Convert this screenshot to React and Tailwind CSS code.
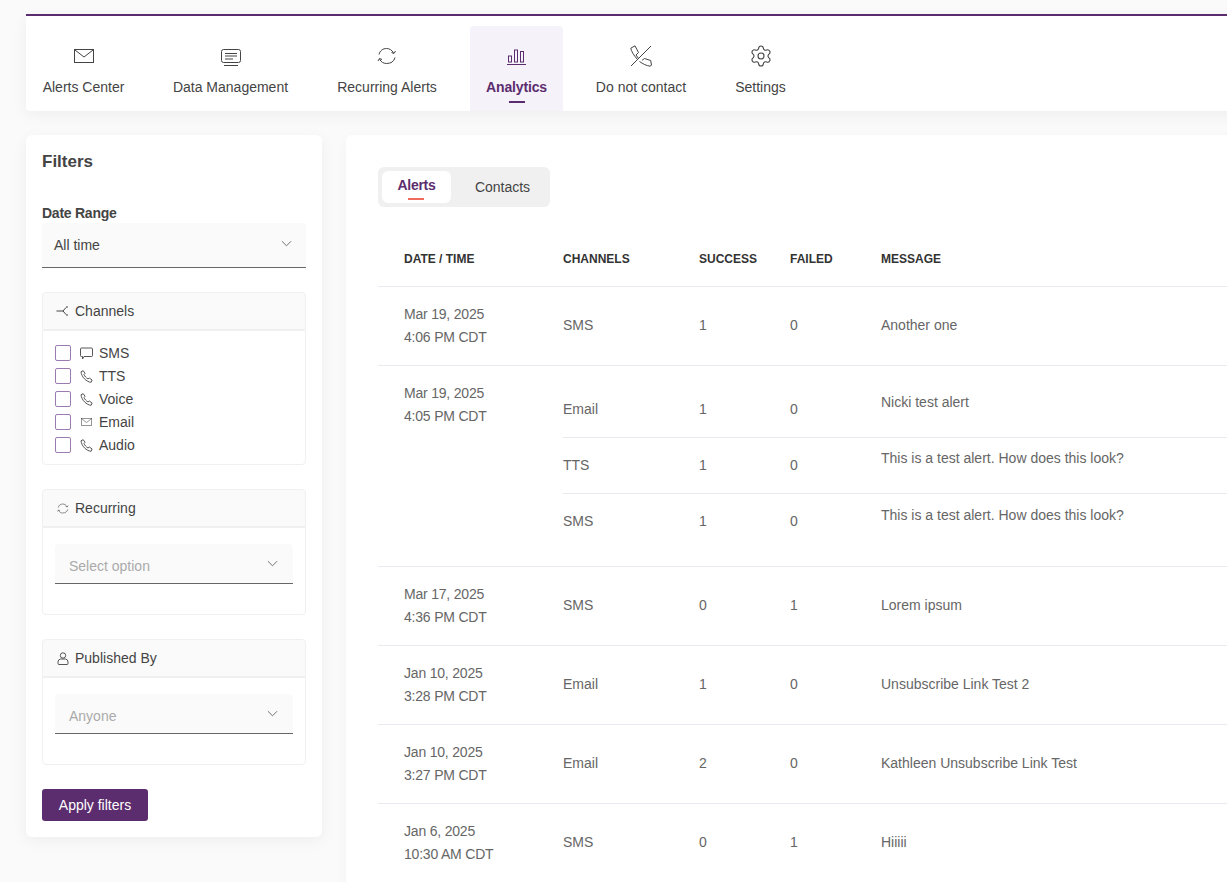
import React from "react";
import { Settings } from "lucide-react";

const font = { fontFamily: '"Liberation Sans", Arial, sans-serif' };

function Envelope({ className }) {
  return (
    <svg viewBox="0 0 20 14" fill="none" stroke="currentColor" strokeWidth="1" className={className}>
      <rect x="0.5" y="0.5" width="19" height="13" />
      <path d="M1 1l9 7 9-7" />
    </svg>
  );
}

function DataIcon({ className }) {
  return (
    <svg viewBox="0 0 20 17" fill="none" stroke="currentColor" strokeWidth="1" className={className}>
      <rect x="0.5" y="0.5" width="19" height="13" rx="2" />
      <path d="M4 4.500h12M4 7h12M4 10h8M3 16.500h14" />
    </svg>
  );
}

function RefreshIcon({ className }) {
  return (
    <svg viewBox="0 0 20 18" fill="none" stroke="currentColor" strokeWidth="1" className={className}>
      <path d="M2 7.500C3 3.500 6 1.500 9.500 1.500c3 0 5.500 1.500 7 4.500" />
      <path d="M18 10.500c-1 4-4 6-8.500 6-3 0-5.500-1.500-7-4.500" />
      <path d="M14.500 5.500l2.500 1 1.500-2.500M5 12.500l-2.500-1-1.500 2.500" />
    </svg>
  );
}

function BarsIcon({ className }) {
  return (
    <svg viewBox="0 0 19 16" fill="none" stroke="currentColor" strokeWidth="1" className={className}>
      <rect x="1.500" y="7" width="3" height="6" />
      <rect x="7.500" y="1" width="3" height="12" />
      <rect x="13.500" y="2.500" width="3" height="10.500" />
      <path d="M0 15.500h19" />
    </svg>
  );
}

function PhoneOff({ className }) {
  return (
    <svg viewBox="0 0 22 22" fill="none" stroke="currentColor" strokeWidth="1" strokeLinejoin="round" className={className}>
      <path d="M21 1L1 21" />
      <path d="M7.500 14.500C3.500 10 1.200 6 0.800 3.200L5 0.800l3.500 6.700-2.500 2.500 2.200 3" />
      <path d="M9.500 16.500c3.500 2.500 7 4.200 10.500 4.700l1.500-1-.8-4.700-6.200-2-2.500 1.800" />
    </svg>
  );
}

function PhoneSmall({ className }) {
  return (
    <svg viewBox="0 0 13 13" fill="none" stroke="currentColor" strokeWidth="0.900" strokeLinejoin="round" className={className}>
      <path d="M1 1.800L3.200.7 5 3.300 4 4.500c.7 1.800 2.200 3.400 4 4.500l1.300-1 2.800 2-1 2.300C6.500 12 1.500 7 1 1.800z" />
    </svg>
  );
}

function Chat({ className }) {
  return (
    <svg viewBox="0 0 13 13" fill="none" stroke="currentColor" strokeWidth="0.900" className={className}>
      <path d="M1.500 1h10a1 1 0 0 1 1 1v6.500a1 1 0 0 1-1 1H4L2.500 12V9.500h-1a1 1 0 0 1-1-1V2a1 1 0 0 1 1-1z" />
    </svg>
  );
}

function Share({ className }) {
  return (
    <svg viewBox="0 0 13 10" fill="none" stroke="currentColor" strokeWidth="1" className={className}>
      <path d="M0.500 5H7l3-3.500M7 5l3 3.500M10 1h2M10 9h2" />
    </svg>
  );
}

function Person({ className }) {
  return (
    <svg viewBox="0 0 12 13" fill="none" stroke="currentColor" strokeWidth="0.900" className={className}>
      <circle cx="6" cy="3.500" r="2.700" />
      <path d="M3.500 7h5A3 3 0 0 1 11 10v1.500a1 1 0 0 1-1 1H2a1 1 0 0 1-1-1V10a3 3 0 0 1 2.500-3z" />
    </svg>
  );
}

function Chevron({ className }) {
  return (
    <svg viewBox="0 0 12 7" fill="none" stroke="currentColor" strokeWidth="1" className={className}>
      <path d="M1 1l5 5 5-5" />
    </svg>
  );
}

const navItems = [
  { label: "Alerts Center", width: "w-[115px]", icon: <Envelope className="w-5 h-[14px]" /> },
  { label: "Data Management", width: "w-[147px]", icon: <DataIcon className="w-5 h-[17px] mt-[2px]" /> },
  { label: "Recurring Alerts", width: "w-[134px]", icon: <RefreshIcon className="w-5 h-[18px]" /> },
  { label: "Analytics", width: "w-[93px]", icon: <BarsIcon className="w-[19px] h-4 mt-[1px]" />, active: true },
  { label: "Do not contact", width: "w-[124px]", icon: <PhoneOff className="w-[22px] h-[22px]" /> },
  { label: "Settings", width: "w-[83px]", icon: <Settings size={24} strokeWidth={1.1} /> },
];

const channels = [
  { label: "SMS", icon: <Chat className="w-[13px] h-[13px] mt-px" /> },
  { label: "TTS", icon: <PhoneSmall className="w-[13px] h-[13px] mt-px" /> },
  { label: "Voice", icon: <PhoneSmall className="w-[13px] h-[13px] mt-px" /> },
  { label: "Email", icon: <Envelope className="w-[11px] h-2" /> },
  { label: "Audio", icon: <PhoneSmall className="w-[13px] h-[13px] mt-px" /> },
];

const rows = [
  { date: "Mar 19, 2025", time: "4:06 PM CDT", items: [{ ch: "SMS", ok: 1, bad: 0, msg: "Another one" }] },
  {
    date: "Mar 19, 2025",
    time: "4:05 PM CDT",
    items: [
      { ch: "Email", ok: 1, bad: 0, msg: "Nicki test alert" },
      { ch: "TTS", ok: 1, bad: 0, msg: "This is a test alert. How does this look?" },
      { ch: "SMS", ok: 1, bad: 0, msg: "This is a test alert. How does this look?" },
    ],
  },
  { date: "Mar 17, 2025", time: "4:36 PM CDT", items: [{ ch: "SMS", ok: 0, bad: 1, msg: "Lorem ipsum" }] },
  { date: "Jan 10, 2025", time: "3:28 PM CDT", items: [{ ch: "Email", ok: 1, bad: 0, msg: "Unsubscribe Link Test 2" }] },
  { date: "Jan 10, 2025", time: "3:27 PM CDT", items: [{ ch: "Email", ok: 2, bad: 0, msg: "Kathleen Unsubscribe Link Test" }] },
  { date: "Jan 6, 2025", time: "10:30 AM CDT", items: [{ ch: "SMS", ok: 0, bad: 1, msg: "Hiiiii" }] },
];

function SelectBox({ text }) {
  return (
    <div className="flex h-10 items-center justify-between rounded-t bg-[#fafafa] border-b border-[#666] pl-[14px] pr-[15px]">
      <span className="pt-[6px] text-[#aaa]">{text}</span>
      <Chevron className="w-[11px] h-[7px] text-[#666]" />
    </div>
  );
}

function FilterGroup({ icon, title, children }) {
  return (
    <div>
      <div className="flex h-[38px] items-center gap-[6px] rounded-t border border-[#f0f0f0] bg-[#fafafa] pl-[13px] text-[#444]">
        <span className="flex w-[13px] justify-center">{icon}</span>
        <span>{title}</span>
      </div>
      <div className="rounded-b border border-[#f0f0f0]">{children}</div>
    </div>
  );
}

function Cells({ item, msgClass = "" }) {
  return (
    <>
      <span className="w-[136px]">{item.ch}</span>
      <span className="w-[91px]">{item.ok}</span>
      <span className="w-[91px]">{item.bad}</span>
      <span className={msgClass}>{item.msg}</span>
    </>
  );
}

function AlertRow({ row }) {
  const multi = row.items.length > 1;
  return (
    <div className={`flex border-b border-[#e8eaf0] ${multi ? "h-[201px]" : "h-[79px]"}`}>
      <div className="w-[185px] pl-[26px] pt-4 leading-[23px] tracking-[-0.2px] text-[#666]">
        <div>{row.date}</div>
        <div>{row.time}</div>
      </div>
      {multi ? (
        <div className="flex-1 pt-2">
          <div className="flex h-[64px] items-center border-b border-[#e8eaf0] pt-2 text-[#666]">
            <Cells item={row.items[0]} msgClass="-mt-[14px]" />
          </div>
          <div className="flex h-14 items-center border-b border-[#e8eaf0] text-[#666]">
            <Cells item={row.items[1]} msgClass="-mt-[14px]" />
          </div>
          <div className="flex h-[54px] items-center text-[#666]">
            <Cells item={row.items[2]} msgClass="-mt-[12px]" />
          </div>
        </div>
      ) : (
        <div className="flex flex-1 items-center pb-[2px] text-[#666]">
          <Cells item={row.items[0]} />
        </div>
      )}
    </div>
  );
}

export default function App() {
  return (
    <div style={font} className="h-[882px] w-[1227px] overflow-hidden bg-[#fafafa] text-[14px] text-[#444]">
      <div className="pl-[26px] pt-[14px]">
        <header className="flex h-[97px] w-[1240px] gap-4 rounded-b border-t-2 border-[#5c2d6e] bg-white pt-[10px] shadow-[0_4px_16px_rgba(0,0,0,0.05)]">
          {navItems.map((item) => (
            <div
              key={item.label}
              className={`relative flex shrink-0 flex-col items-center rounded-t pt-[10px] ${item.width} ${item.active ? "bg-[#f5f2fa] font-bold tracking-[-0.15px] text-[#5c2d6e]" : "text-[#444]"}`}
            >
              <div className="flex h-10 items-center">{item.icon}</div>
              <div className="mt-px leading-5">{item.label}</div>
              {item.active && <div className="absolute bottom-2 left-[39px] h-[2px] w-4 bg-[#5c2d6e]" />}
            </div>
          ))}
        </header>

        <div className="mt-6 flex items-start gap-6">
          <aside className="w-[296px] shrink-0 rounded-md bg-white px-4 pb-4 pt-[17px] shadow-[0_4px_16px_rgba(0,0,0,0.05)]">
            <h2 className="text-[17px] font-bold leading-5">Filters</h2>
            <div className="mt-[32px] font-bold leading-[18px] tracking-[-0.25px]">Date Range</div>
            <div className="mt-px">
              <div className="flex h-[45px] items-center justify-between rounded-t bg-[#fafafa] border-b border-[#666] pl-3 pr-[14px]">
                <span>All time</span>
                <Chevron className="w-[11px] h-[7px] text-[#666] -mt-1" />
              </div>
            </div>

            <div className="mt-6">
              <FilterGroup icon={<Share className="w-[13px] h-[10px]" />} title="Channels">
                <div className="flex flex-col gap-[5px] px-3 pb-[10px] pt-[13px]">
                  {channels.map((c) => (
                    <label key={c.label} className="flex h-[18px] items-center">
                      <span className="h-4 w-4 rounded-[2px] border border-[#9b7bb0] bg-white" />
                      <span className="ml-[9px] flex w-[13px] justify-center">{c.icon}</span>
                      <span className="ml-[6px]">{c.label}</span>
                    </label>
                  ))}
                </div>
              </FilterGroup>
            </div>

            <div className="mt-6">
              <FilterGroup icon={<RefreshIcon className="w-[12px] h-[11px]" />} title="Recurring">
                <div className="px-3 pb-[30px] pt-4">
                  <SelectBox text="Select option" />
                </div>
              </FilterGroup>
            </div>

            <div className="mt-6">
              <FilterGroup icon={<Person className="w-3 h-[13px]" />} title="Published By">
                <div className="px-3 pb-[30px] pt-4">
                  <SelectBox text="Anyone" />
                </div>
              </FilterGroup>
            </div>

            <button className="mt-6 h-8 w-[106px] rounded-[3px] bg-[#5c2d6e] text-white">Apply filters</button>
          </aside>

          <main className="h-[800px] w-[1000px] shrink-0 rounded-md bg-white px-8 pt-8 shadow-[0_4px_16px_rgba(0,0,0,0.03)]">
            <div className="flex h-10 w-[172px] items-center rounded-md bg-[#f0f0f0] p-1">
              <div className="relative flex h-8 w-[69px] items-center justify-center rounded-md bg-white pb-[3px] font-bold tracking-[-0.3px] text-[#5c2d6e]">
                Alerts
                <span className="absolute bottom-[3px] left-[26px] h-[2px] w-4 bg-[#f06a5e]" />
              </div>
              <div className="flex flex-1 items-center justify-center pl-2">Contacts</div>
            </div>

            <div className="mt-[25px] flex h-[55px] items-center border-b border-[#e8eaf0] pb-px pl-[26px] text-[12px] font-bold text-[#333]">
              <span className="w-[159px]">DATE / TIME</span>
              <span className="w-[136px]">CHANNELS</span>
              <span className="w-[91px]">SUCCESS</span>
              <span className="w-[91px]">FAILED</span>
              <span>MESSAGE</span>
            </div>
            {rows.map((row, i) => (
              <AlertRow key={i} row={row} />
            ))}
          </main>
        </div>
      </div>
    </div>
  );
}
